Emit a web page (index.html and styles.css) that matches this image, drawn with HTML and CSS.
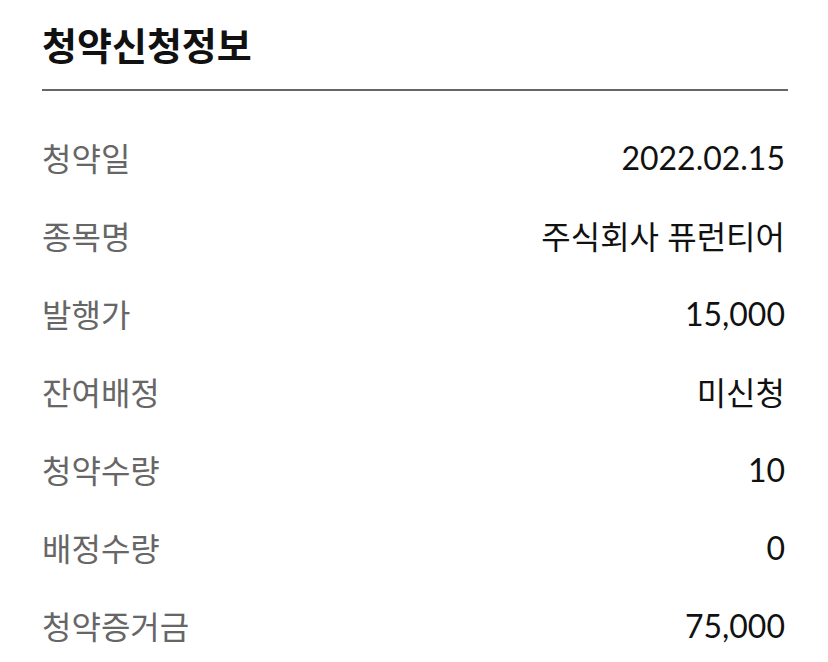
FILE: index.html
```html
<!DOCTYPE html>
<html lang="ko">
<head>
<meta charset="utf-8">
<link rel="stylesheet" href="styles.css">
</head>
<body>
<div class="page">
  <h1 class="title">청약신청정보</h1>
  <dl class="info">
    <div class="row"><dt>청약일</dt><dd>2022.02.15</dd></div>
    <div class="row"><dt>종목명</dt><dd>주식회사 퓨런티어</dd></div>
    <div class="row"><dt>발행가</dt><dd>15,000</dd></div>
    <div class="row"><dt>잔여배정</dt><dd>미신청</dd></div>
    <div class="row"><dt>청약수량</dt><dd>10</dd></div>
    <div class="row"><dt>배정수량</dt><dd>0</dd></div>
    <div class="row"><dt>청약증거금</dt><dd>75,000</dd></div>
  </dl>
</div>
</body>
</html>
```
FILE: styles.css
```css
html, body {
  margin: 0;
  padding: 0;
  background: #fff;
}
.page {
  padding: 0 40px 0 42px;
  font-family: Lato, "Noto Sans CJK KR", sans-serif;
}
.title {
  margin: 0;
  font-size: 38px;
  font-weight: 700;
  color: #111;
  line-height: 90px;
  height: 89px;
  border-bottom: 2px solid #666;
}
.info {
  margin: 0;
  padding-top: 27px;
}
.row {
  display: flex;
  justify-content: space-between;
  align-items: center;
  height: 78px;
  font-size: 32px;
}
.row dt {
  color: #666;
}
.row dd {
  margin: 0 3px 0 0;
  color: #111;
}
```
